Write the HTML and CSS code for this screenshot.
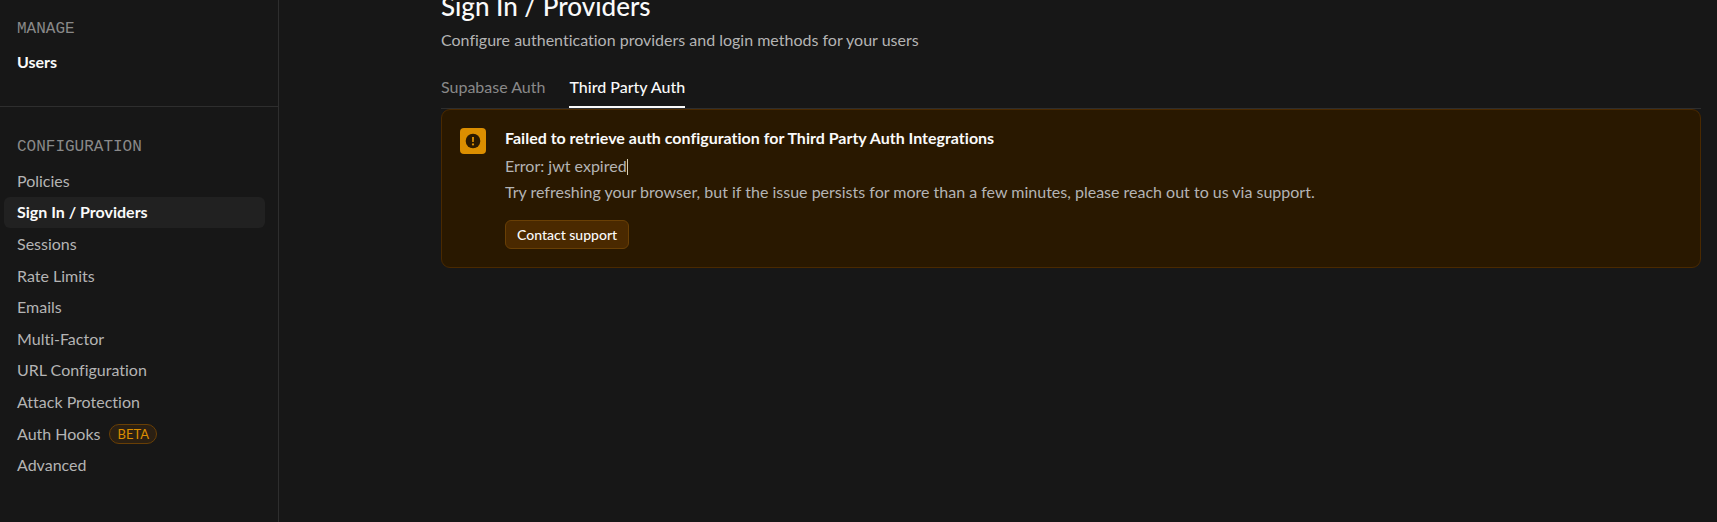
FILE: index.html
```html
<!DOCTYPE html>
<html lang="en">
<head>
    <meta charset="UTF-8">
    <meta name="viewport" content="width=device-width, initial-scale=1.0">
    <title>Sign In / Providers</title>
    <link rel="stylesheet" href="styles.css">
</head>
<body>
    <div class="layout">
        <!-- Sidebar -->
        <nav class="sidebar">
            <section class="menu">
                <h2>MANAGE</h2>
                <ul>
                    <li><a href="#" class="strong">Users</a></li>
                </ul>
            </section>
            <section class="menu menu-config">
                <h2>CONFIGURATION</h2>
                <ul>
                    <li><a href="#">Policies</a></li>
                    <li><a href="#" class="active">Sign In / Providers</a></li>
                    <li><a href="#">Sessions</a></li>
                    <li><a href="#">Rate Limits</a></li>
                    <li><a href="#">Emails</a></li>
                    <li><a href="#">Multi-Factor</a></li>
                    <li><a href="#">URL Configuration</a></li>
                    <li><a href="#">Attack Protection</a></li>
                    <li><a href="#">Auth Hooks <span class="badge">BETA</span></a></li>
                    <li><a href="#">Advanced</a></li>
                </ul>
            </section>
        </nav>

        <!-- Page content -->
        <main class="content">
            <h1>Sign In / Providers</h1>
            <p class="subtitle">Configure authentication providers and login methods for your users</p>

            <div class="tabs">
                <button type="button">Supabase Auth</button>
                <button type="button" class="active">Third Party Auth</button>
            </div>

            <div class="alert" role="alert">
                <svg class="alert-icon" viewBox="0 0 26 26" aria-hidden="true">
                    <rect width="26" height="26" rx="4" fill="#db8e00"/>
                    <circle cx="13" cy="13" r="7.3" fill="#2a1900"/>
                    <path d="M12 9h2l-.2 5h-1.6z" fill="#db8e00"/>
                    <circle cx="13" cy="16.4" r="1.1" fill="#db8e00"/>
                </svg>
                <div class="alert-body">
                    <h3>Failed to retrieve auth configuration for Third Party Auth Integrations</h3>
                    <p class="error">Error: jwt expired<span class="caret"></span></p>
                    <p>Try refreshing your browser, but if the issue persists for more than a few minutes, please reach out to us via support.</p>
                    <button type="button">Contact support</button>
                </div>
            </div>
        </main>
    </div>
</body>
</html>
```
FILE: styles.css
```css
* {
    margin: 0;
    padding: 0;
    box-sizing: border-box;
}

body {
    background: #171717;
    color: #b4b4b4;
    font-family: Lato, sans-serif;
    font-size: 16px;
    font-variant-ligatures: none;
    line-height: 26px;
}

button {
    font-family: inherit;
    font-variant-ligatures: inherit;
    cursor: pointer;
}

.layout {
    display: flex;
    min-height: 100vh;
}

/* Sidebar */
.sidebar {
    flex: 0 0 279px;
    border-right: 1px solid #2e2e2e;
}

.menu {
    padding: 16px 13px 29px 4px;
}

.menu h2 {
    padding-left: 13px;
    margin-bottom: 5px;
    color: #898989;
    font-family: "Liberation Mono", monospace;
    font-size: 16px;
    font-weight: normal;
}

.menu-config {
    border-top: 1px solid #2e2e2e;
    padding-top: 27px;
}

.menu ul {
    display: grid;
    grid-auto-rows: 1fr;
    list-style: none;
}

.menu-config ul {
    min-height: 316px;
}

.menu li {
    display: grid;
}

.menu a {
    display: flex;
    align-items: center;
    gap: 9px;
    padding: 2px 13px;
    border-radius: 6px;
    color: #b4b4b4;
    text-decoration: none;
}

.menu a.strong {
    color: #fafafa;
    font-weight: bold;
}

.menu a.active {
    background: #212121;
    color: #fafafa;
    font-weight: bold;
}

.badge {
    padding: 0 7px;
    border: 1px solid #693f05;
    border-radius: 10px;
    background: #2b2013;
    color: #db8e00;
    font-size: 13px;
    line-height: 18px;
}

/* Content */
.content {
    flex: 1;
    min-width: 0;
    margin-top: -10px;
    padding: 0 16px 0 162px;
}

h1 {
    color: #fafafa;
    font-size: 26px;
    font-weight: 500;
    line-height: 32px;
}

.subtitle {
    margin-top: 5px;
}

.tabs {
    display: flex;
    gap: 24px;
    margin-top: 21px;
    border-bottom: 1px solid #2e2e2e;
}

.tabs button {
    padding: 0 0 6px;
    background: none;
    border: none;
    border-bottom: 2px solid transparent;
    color: #898989;
    font-size: 16px;
    line-height: 26px;
}

.tabs button.active {
    border-bottom-color: #fafafa;
    color: #fafafa;
    font-weight: 500;
}

.alert {
    display: flex;
    gap: 19px;
    padding: 18px;
    border: 1px solid #4a2900;
    border-radius: 9px;
    background: #291800;
}

.alert-icon {
    flex: none;
    width: 26px;
    height: 26px;
}

.alert h3 {
    margin-top: -3px;
    color: #fafafa;
    font-size: 16px;
}

.alert .error {
    margin-top: 2px;
}

.caret {
    display: inline-block;
    width: 1px;
    height: 16px;
    background: #d8d0b4;
    vertical-align: -3px;
}

.alert button {
    display: block;
    margin-top: 15px;
    padding: 0 11px;
    border: 1px solid #693f05;
    border-radius: 6px;
    background: #4a2900;
    color: #fafafa;
    font-size: 14px;
    font-weight: 500;
    line-height: 27px;
}
```
